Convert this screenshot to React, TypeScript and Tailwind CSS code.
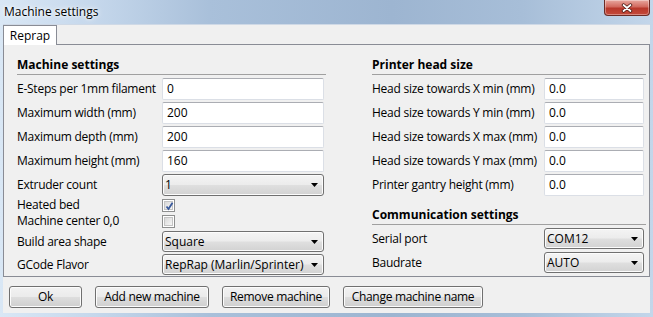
import React from "react";

const F = "font-['Open_Sans',sans-serif]";

function TextInput({ value, w }: { value: string; w: string }) {
  return (
    <div
      className={`${w} h-[22px] bg-white border border-[#dbdfe6] border-t-[#abadb3] rounded-[2px] pl-[4px] flex items-center text-[12px] text-black`}
    >
      {value}
    </div>
  );
}

function Arrow() {
  return (
    <svg width="7" height="4" viewBox="0 0 7 4" className="block">
      <path d="M0 0H7L3.5 4Z" fill="#000" />
    </svg>
  );
}

function Select({ value, w, h = "h-[22px]" }: { value: string; w: string; h?: string }) {
  return (
    <div
      className={`${w} ${h} rounded-[3px] border border-[#707070] bg-[linear-gradient(180deg,#f4f4f4_0%,#ececec_48%,#dfdfdf_52%,#d2d2d2_100%)] shadow-[inset_0_0_0_1px_#fcfcfc] flex items-center pl-[2px] pr-[5px] text-[12px] text-black`}
    >
      <span className="flex-1">{value}</span>
      <Arrow />
    </div>
  );
}

function Checkbox({ checked }: { checked?: boolean }) {
  return (
    <div className="w-[13px] h-[13px] border border-[#8e8f8f] bg-white p-px">
      <div className="w-full h-full border border-[#c4c4c4] bg-[linear-gradient(135deg,#d9d9d9_0%,#f6f6f6_100%)] relative">
        {checked && (
          <svg width="11" height="11" viewBox="0 0 11 11" className="absolute -left-[1px] -top-[1px]">
            <path d="M2.5 5.5L4.5 8L8.5 1.8" stroke="#3a5a9c" strokeWidth="1.8" fill="none" />
          </svg>
        )}
      </div>
    </div>
  );
}

function Row({ label, labelW, children }: { label: string; labelW: string; children: React.ReactNode }) {
  return (
    <div className="flex items-center">
      <div className={`${labelW} shrink-0 text-[12px] text-black whitespace-nowrap tracking-[-0.25px]`}>{label}</div>
      {children}
    </div>
  );
}

function Btn({ label, w }: { label: string; w: string }) {
  return (
    <div
      className={`${w} h-[22px] rounded-[3px] border border-[#707070] bg-[linear-gradient(180deg,#f2f2f2_0%,#ebebeb_48%,#dddddd_52%,#cfcfcf_100%)] shadow-[inset_0_0_0_1px_#fcfcfc] flex items-center justify-center text-[12px] text-black tracking-[-0.3px]`}
    >
      {label}
    </div>
  );
}

export default function App() {
  return (
    <div
      className={`${F} w-[653px] h-[317px] flex flex-col overflow-hidden bg-[linear-gradient(90deg,#d9e7f5_0%,#c6d8ec_14%,#a9c0da_32%,#9db5d1_60%,#a7bed8_80%,#c3d6ea_100%)]`}
    >
      {/* Title bar */}
      <div className="h-[24px] relative flex items-center pl-[4px] shrink-0">
        <span className="text-[12px] text-black [text-shadow:0_0_6px_#ffffff,0_0_3px_#ffffff]">
          Machine settings
        </span>
        <div className="absolute top-0 right-[3px] w-[46px] h-[16px] rounded-b-[4px] border border-t-0 border-[#6b2b25] bg-[linear-gradient(180deg,#e8a89f_0%,#d2695e_45%,#b8382b_55%,#c44a3c_100%)] shadow-[inset_0_0_0_1px_rgba(255,255,255,0.35)] flex items-center justify-center">
          <svg width="12" height="10" viewBox="0 0 12 10">
            <path d="M2.5 2L9.5 8M9.5 2L2.5 8" stroke="#4a1a14" strokeWidth="3.4" strokeLinecap="round" />
            <path d="M2.5 2L9.5 8M9.5 2L2.5 8" stroke="#ffffff" strokeWidth="1.8" strokeLinecap="round" />
          </svg>
        </div>
      </div>

      {/* Client area */}
      <div className="ml-[3px] w-[647px] h-[289px] bg-[#f0f0f0] flex flex-col border-t border-[#cfd9e6]">
        {/* Tab strip */}
        <div className="h-[20px] flex">
          <div className="w-[54px] h-[20px] bg-white border border-[#898c95] border-b-0 relative z-10 flex items-center justify-center text-[12px] text-black">
            Reprap
          </div>
        </div>
        {/* Panel */}
        <div className="-mt-px h-[233px] border border-[#898c95] flex pl-[13px] pt-[12px] pr-[2px]">
          {/* Left column */}
          <div className="w-[309px] flex flex-col">
            <div className="h-[16px] leading-[16px] text-[12px] font-bold text-black">Machine settings</div>
            <div className="mt-[1px] h-px bg-[#a0a0a0]" />
            <div className="mt-[3px] flex flex-col gap-[2px]">
              <Row label="E-Steps per 1mm filament" labelW="w-[145px]">
                <TextInput value="0" w="w-[162px]" />
              </Row>
              <Row label="Maximum width (mm)" labelW="w-[145px]">
                <TextInput value="200" w="w-[162px]" />
              </Row>
              <Row label="Maximum depth (mm)" labelW="w-[145px]">
                <TextInput value="200" w="w-[162px]" />
              </Row>
              <Row label="Maximum height (mm)" labelW="w-[145px]">
                <TextInput value="160" w="w-[162px]" />
              </Row>
              <Row label="Extruder count" labelW="w-[145px]">
                <Select value="1" w="w-[162px]" />
              </Row>
            </div>
            <div className="mt-[1px] h-[16px] flex items-center">
              <div className="w-[145px] text-[12px] text-black tracking-[-0.25px]">Heated bed</div>
              <Checkbox checked />
            </div>
            <div className="h-[16px] flex items-center">
              <div className="w-[145px] text-[12px] text-black tracking-[-0.25px]">Machine center 0,0</div>
              <Checkbox />
            </div>
            <div className="mt-[2px] flex flex-col gap-[2px]">
              <Row label="Build area shape" labelW="w-[145px]">
                <Select value="Square" w="w-[162px]" h="h-[21px]" />
              </Row>
              <Row label="GCode Flavor" labelW="w-[145px]">
                <Select value="RepRap (Marlin/Sprinter)" w="w-[162px]" h="h-[21px]" />
              </Row>
            </div>
          </div>

          {/* Right column */}
          <div className="ml-[46px] w-[274px] flex flex-col">
            <div className="h-[16px] leading-[16px] text-[12px] font-bold text-black">Printer head size</div>
            <div className="mt-[1px] h-px bg-[#a0a0a0]" />
            <div className="mt-[3px] flex flex-col gap-[2px]">
              <Row label="Head size towards X min (mm)" labelW="w-[172px]">
                <TextInput value="0.0" w="w-[100px]" />
              </Row>
              <Row label="Head size towards Y min (mm)" labelW="w-[172px]">
                <TextInput value="0.0" w="w-[100px]" />
              </Row>
              <Row label="Head size towards X max (mm)" labelW="w-[172px]">
                <TextInput value="0.0" w="w-[100px]" />
              </Row>
              <Row label="Head size towards Y max (mm)" labelW="w-[172px]">
                <TextInput value="0.0" w="w-[100px]" />
              </Row>
              <Row label="Printer gantry height (mm)" labelW="w-[172px]">
                <TextInput value="0.0" w="w-[100px]" />
              </Row>
            </div>
            <div className="mt-[11px] h-[16px] leading-[16px] text-[12px] font-bold text-black">
              Communication settings
            </div>
            <div className="mt-[1px] h-px bg-[#a0a0a0]" />
            <div className="mt-[3px] flex flex-col gap-[3px]">
              <Row label="Serial port" labelW="w-[172px]">
                <Select value="COM12" w="w-[100px]" h="h-[21px]" />
              </Row>
              <Row label="Baudrate" labelW="w-[172px]">
                <Select value="AUTO" w="w-[100px]" h="h-[21px]" />
              </Row>
            </div>
          </div>
        </div>

        {/* Buttons */}
        <div className="mt-[9px] pl-[6px] flex gap-[13px]">
          <Btn label="Ok" w="w-[73px]" />
          <Btn label="Add new machine" w="w-[114px]" />
          <Btn label="Remove machine" w="w-[108px]" />
          <Btn label="Change machine name" w="w-[140px]" />
        </div>
      </div>
    </div>
  );
}
